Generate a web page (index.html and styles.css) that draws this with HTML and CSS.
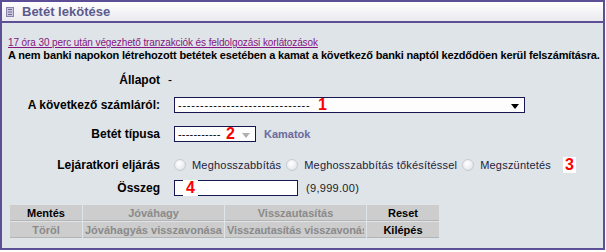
FILE: index.html
```html
<!DOCTYPE html>
<html lang="hu">
  <head>
    <meta charset="UTF-8" />
    <title>Betét lekötése</title>
    <link rel="stylesheet" href="styles.css">
  </head>
  <body>
    <div class="panel">
      <div class="panel-head">
        <svg class="head-icon" width="8" height="10" viewBox="0 0 8 10">
          <rect x="0.5" y="0.5" width="7" height="9" fill="#c9c6dc" stroke="#8a84b0" />
          <rect x="2" y="2" width="4" height="1" fill="#6f6a98" />
          <rect x="2" y="4.5" width="4" height="1" fill="#6f6a98" />
          <rect x="2" y="7" width="4" height="1" fill="#6f6a98" />
        </svg>
        Betét lekötése
      </div>

      <div class="panel-body">
        <a class="notice-link" href="#">17 óra 30 perc után végezhető tranzakciók és feldolgozási korlátozások</a>
        <div class="notice">
          A nem banki napokon létrehozott betétek esetében a kamat a következő banki naptól kezdődöen kerül felszámításra.
        </div>

        <div class="form-grid">
          <div class="label">Állapot</div>
          <div class="field"><span class="dash">-</span></div>

          <div class="label">A következő számláról:</div>
          <div class="field">
            <div class="select select-wide">
              <span class="select-text">------------------------------</span>
              <span class="marker marker-1">1</span>
              <span class="arrow"></span>
            </div>
          </div>

          <div class="label">Betét típusa</div>
          <div class="field">
            <div class="select select-small">
              <span class="select-text">-----------</span>
              <span class="marker marker-2">2</span>
              <span class="arrow arrow-off"></span>
            </div>
            <span class="rates">Kamatok</span>
          </div>

          <div class="label">Lejáratkori eljárás</div>
          <div class="field">
            <label class="option"><span class="radio"></span>Meghosszabbítás</label>
            <label class="option"><span class="radio"></span>Meghosszabbítás tőkésítéssel</label>
            <label class="option"><span class="radio"></span>Megszüntetés</label>
            <span class="marker marker-3">3</span>
          </div>

          <div class="label">Összeg</div>
          <div class="field">
            <div class="amount-box"><span class="marker marker-4">4</span></div>
            <span class="amount-hint">(9,999.00)</span>
          </div>
        </div>

        <table class="actions">
          <tr>
            <td class="btn btn-first">Mentés</td>
            <td class="btn btn-wide off">Jóváhagy</td>
            <td class="btn btn-wide off">Visszautasítás</td>
            <td class="btn btn-last">Reset</td>
          </tr>
          <tr>
            <td class="btn btn-first off">Töröl</td>
            <td class="btn btn-wide off">Jóváhagyás visszavonása</td>
            <td class="btn btn-wide off"><div class="clip">Visszautasítás visszavonása</div></td>
            <td class="btn btn-last">Kilépés</td>
          </tr>
        </table>
      </div>
    </div>
  </body>
</html>
```

FILE: styles.css
```css
* {
  margin: 0;
  padding: 0;
  box-sizing: border-box;
}

body {
  background: #ffffff;
  font-family: "Liberation Sans", Arial, sans-serif;
  font-size: 11px;
  color: #000000;
}

.panel {
  width: 605px;
  height: 250px;
  border: 2px solid #5c4f96;
  background: #dee4e8;
}

.panel-head {
  height: 21px;
  border-bottom: 2px solid #5c4f96;
  background: linear-gradient(to bottom, #ffffff 0%, #e9e9ef 100%);
  display: flex;
  align-items: center;
  padding-left: 4px;
  font-weight: bold;
  font-size: 13px;
  color: #5b5a8e;
}

.head-icon {
  margin-right: 8px;
}

.panel-body {
  padding: 14px 6px 0 6px;
}

.notice-link {
  display: block;
  color: #85157f;
  font-size: 10px;
  line-height: 12px;
  letter-spacing: -0.1px;
}

.notice {
  font-weight: bold;
  font-size: 11px;
  line-height: 12px;
  letter-spacing: -0.15px;
  white-space: nowrap;
}

.form-grid {
  display: grid;
  grid-template-columns: 152px 1fr;
  grid-template-rows: 24px 26px 32px 30px 16px;
  margin-top: 7px;
  align-items: center;
}

.label {
  text-align: right;
  font-weight: bold;
  font-size: 12px;
}

.field {
  display: flex;
  align-items: center;
  padding-left: 14px;
}

.dash {
  margin-left: -6px;
  font-size: 12px;
}

.select {
  position: relative;
  height: 16px;
  border: 1px solid #161650;
  background: #fdfdfd;
  display: flex;
  align-items: center;
  padding-left: 3px;
  font-size: 11px;
  overflow: hidden;
}

.select-wide {
  width: 351px;
}

.select-wide .select-text {
  letter-spacing: 0.75px;
}

.select-small {
  width: 82px;
}

.select-small .select-text {
  letter-spacing: 0.2px;
}

.arrow {
  position: absolute;
  right: 5px;
  top: 6px;
  border-left: 4px solid transparent;
  border-right: 4px solid transparent;
  border-top: 5px solid #000000;
}

.arrow-off {
  border-top-color: #b0b0b0;
}

.marker {
  position: absolute;
  background: #ffffff;
  color: #ff0000;
  font-weight: bold;
  font-size: 16px;
  line-height: 16px;
  padding: 0 3px;
}

.marker-1 {
  left: 140px;
  top: -1px;
}

.marker-2 {
  left: 48px;
  top: -1px;
}

.marker-3 {
  position: static;
  margin-left: 7px;
  padding: 0 2px;
}

.marker-4 {
  left: 8px;
  top: -1px;
}

.rates {
  margin-left: 8px;
  font-weight: bold;
  color: #6b6a9c;
}

.option {
  display: flex;
  align-items: center;
  margin-right: 5px;
  color: #221c3c;
  font-size: 11px;
  letter-spacing: 0.2px;
}

.radio {
  width: 12px;
  height: 12px;
  border-radius: 50%;
  border: 1px solid #c8cbcf;
  background: radial-gradient(circle at 40% 35%, #ffffff 0%, #eceef0 55%, #d6d9dd 100%);
  margin-right: 6px;
}

.amount-box {
  position: relative;
  width: 124px;
  height: 16px;
  border: 1px solid #161650;
  background: #ffffff;
}

.amount-hint {
  margin-left: 8px;
  color: #222222;
  letter-spacing: 0.3px;
}

.actions {
  border-collapse: separate;
  border-spacing: 1px;
  margin-left: 1px;
  margin-top: 8px;
}

.btn {
  height: 16px;
  background: #cdcdcd;
  border-bottom: 1px solid #b4b4b4;
  text-align: center;
  font-weight: bold;
  font-size: 11px;
  color: #000000;
  padding: 0 2px;
}

.btn.off {
  color: #8a8a8a;
}

.btn-first {
  width: 72px;
}

.btn-wide {
  width: 141px;
}

.btn-last {
  width: 72px;
}

.clip {
  width: 137px;
  overflow: hidden;
  white-space: nowrap;
  text-align: left;
  letter-spacing: -0.1px;
}
```
